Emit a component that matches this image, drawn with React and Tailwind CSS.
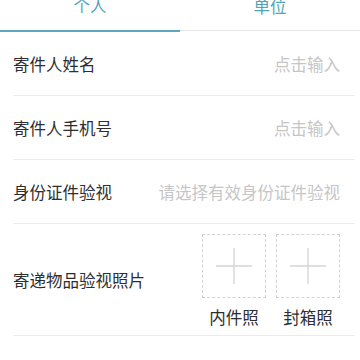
import React from "react";

const font = { fontFamily: '"Noto Sans CJK SC", "Noto Sans", sans-serif' };

function Plus() {
  return (
    <svg width="36" height="36" viewBox="0 0 36 36">
      <line x1="0" y1="18" x2="36" y2="18" stroke="#d4d4d4" strokeWidth="1.3" />
      <line x1="18" y1="0" x2="18" y2="36" stroke="#d4d4d4" strokeWidth="1.3" />
    </svg>
  );
}

function Row({ label, placeholder }) {
  return (
    <div className="ml-[13px] mr-[5px] h-[64px] flex items-center justify-between border-b border-[#ececec] pr-[15px]">
      <span className="text-[16.5px] text-[#2e2e2e] leading-6">{label}</span>
      {placeholder && <span className="text-[16.5px] text-[#c6c6c6] leading-6">{placeholder}</span>}
    </div>
  );
}

export default function App() {
  return (
    <div className="w-[360px] h-[360px] overflow-hidden bg-white" style={font}>
      <div className="-mt-[20px] flex items-start">
        <div className="flex-1 h-[52px] flex items-center justify-center border-b-2 border-[#5ba7bd] text-[16.5px] text-[#4ea4ba]">
          个人
        </div>
        <div className="flex-1 h-[51px] flex items-center justify-center border-b border-[#e6e6e6] text-[16.5px] text-[#4ea4ba] pt-[2px]">
          单位
        </div>
      </div>
      <Row label="寄件人姓名" placeholder="点击输入" />
      <Row label="寄件人手机号" placeholder="点击输入" />
      <Row label="身份证件验视" placeholder="请选择有效身份证件验视" />
      <div className="ml-[13px] mr-[5px] flex items-center justify-between border-b border-[#ececec] pr-[15px]">
        <span className="text-[16.5px] text-[#2e2e2e] leading-6">寄递物品验视照片</span>
        <div className="flex gap-[10px] pt-[10px] pb-[6px]">
          {["内件照", "封箱照"].map((t) => (
            <div key={t} className="flex flex-col items-center">
              <div className="w-[64px] h-[64px] border border-dashed border-[#d2d2d2] flex items-center justify-center">
                <Plus />
              </div>
              <span className="mt-[7px] text-[16.5px] leading-6 text-[#2e2e2e]">{t}</span>
            </div>
          ))}
        </div>
      </div>
      <div className="ml-[13px] mr-[5px] pt-[24px] h-[64px] flex items-start">
        <span className="text-[16.5px] text-[#2e2e2e] leading-6">寄件人地址</span>
      </div>
    </div>
  );
}
